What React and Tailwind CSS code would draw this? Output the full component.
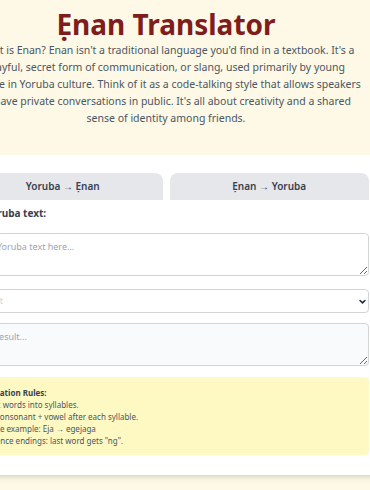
import { useState } from "react";

// --- Onglet de direction ---
function Onglet({ label, onClick }) {
  return (
    <button
      onClick={onClick}
      className="flex-1 h-[27px] rounded-t-lg bg-[#e5e7eb] text-[10px] font-semibold text-[#374151]"
    >
      {label}
    </button>
  );
}

// --- Règles ---
function Regles() {
  return (
    <div className="mt-[11px] rounded bg-[#fef9c3] pl-[16px] pr-3 pt-[10px] pb-[8px] text-[8px] leading-[12px] text-[#4b5563]">
      <p className="font-bold text-[#374151]">Formation Rules:</p>
      <p>Break words into syllables.</p>
      <p>Add consonant + vowel after each syllable.</p>
      <p>Simple example: Eja → egejaga</p>
      <p>Sentence endings: last word gets "ng".</p>
    </div>
  );
}

export default function App() {
  const [mode, setMode] = useState("yo");
  const [texte, setTexte] = useState("");

  return (
    <div className="min-h-screen overflow-hidden bg-[#fdf9e6] font-['Noto_Sans',sans-serif]">
      <div className="w-[446px] ml-[-57px]">
        <header className="px-5 pt-[6px] pb-[28px] text-center">
          <h1 className="text-[28px] leading-[36px] font-bold text-[#7f1d1d]">Ẹnan Translator</h1>
          <p className="mx-auto w-[391px] text-[10.5px] leading-[17px] text-[#4b5563]">
            What is Enan? Enan isn't a traditional language you'd find in a textbook. It's a playful, secret form of
            communication, or slang, used primarily by young people in Yoruba culture. Think of it as a code-talking
            style that allows speakers to have private conversations in public. It's all about creativity and a shared
            sense of identity among friends.
          </p>
        </header>

        <main className="bg-white px-5 pt-[18px] pb-5 rounded-lg shadow-md">
          <div className="flex gap-[7px]">
            <Onglet label="Yoruba → Ẹnan" onClick={() => setMode("yo")} />
            <Onglet label="Ẹnan → Yoruba" onClick={() => setMode("en")} />
          </div>

          <label className="block mt-[5px] text-[10px] leading-4 font-bold text-[#374151]">
            {mode === "yo" ? "Add Yoruba text:" : "Add Ẹnan text:"}
          </label>
          <textarea
            value={texte}
            onChange={(e) => setTexte(e.target.value)}
            placeholder="Enter Yoruba text here..."
            className="mt-[12px] block w-full h-[43px] rounded border border-[#d1d5db] px-2 py-[6px] text-[9px] placeholder:text-[#9ca3af]"
          />

          <div className="relative mt-[13px]">
            <select className="block w-full h-[24px] appearance-none rounded border border-[#d1d5db] bg-white px-2 text-[9px] text-[#d1d5db]">
              <option>Default</option>
            </select>
            <svg
              viewBox="0 0 10 10"
              className="pointer-events-none absolute right-[3px] top-[9px] w-[7px] h-[7px]"
              fill="none"
              stroke="#1f2937"
              strokeWidth="2.2"
              strokeLinecap="round"
              strokeLinejoin="round"
            >
              <path d="M1.5 3.5 L5 7 L8.5 3.5" />
            </svg>
          </div>

          <textarea
            readOnly
            placeholder="Ẹnan result..."
            className="mt-[10px] block w-full h-[43px] rounded border border-[#d1d5db] bg-[#f9fafb] px-2 py-[6px] text-[9px] placeholder:text-[#9ca3af]"
          />

          <Regles />
        </main>
      </div>
    </div>
  );
}
